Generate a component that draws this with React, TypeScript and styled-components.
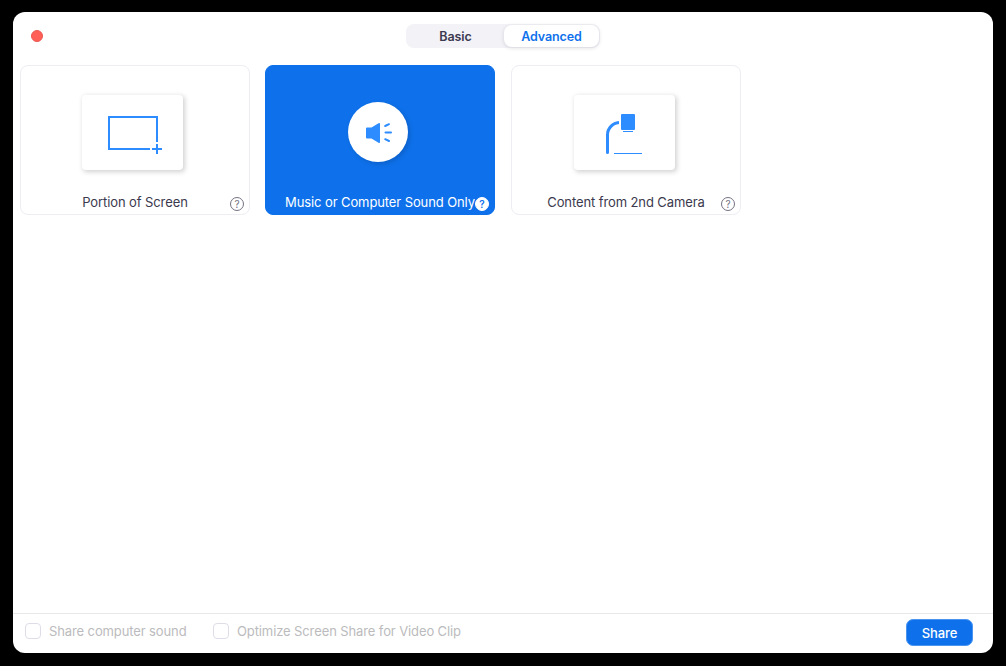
import React from "react";
import styled, { createGlobalStyle } from "styled-components";

const GlobalStyle = createGlobalStyle`
  * { box-sizing: border-box; }
  body { margin: 0; background: #000; overflow: hidden; }
  svg { display: block; }
`;

const Desktop = styled.div`
  width: 1006px;
  height: 666px;
  padding: 12px 13px 13px;
  background: #000;
  font-family: Inter, "Liberation Sans", sans-serif;
`;

const Window = styled.main`
  display: flex;
  flex-direction: column;
  width: 980px;
  height: 641px;
  background: #fff;
  border-radius: 12px;
  overflow: hidden;
`;

const TitleBar = styled.header`
  display: grid;
  grid-template-columns: 1fr 194px 1fr;
  align-items: center;
  height: 48px;
  padding-left: 18px;
  padding-right: 18px;
`;

const CloseButton = styled.button`
  width: 12px;
  height: 12px;
  padding: 0;
  border: 1px solid #ea5750;
  border-radius: 50%;
  background: #ff5f57;
`;

const Tabs = styled.div`
  display: flex;
  height: 24px;
  padding: 1px;
  border-radius: 8px;
  background: #f2f2f7;
`;

const Tab = styled.button<{ $active?: boolean }>`
  flex: ${(p) => (p.$active ? "0 0 95px" : "1")};
  height: 22px;
  padding: 1px 0 0;
  border: 0;
  border-radius: 8px;
  font: 600 12.5px/20px Inter, "Liberation Sans", sans-serif;
  letter-spacing: -0.1px;
  color: ${(p) => (p.$active ? "#0e71eb" : "#3c3a50")};
  background: ${(p) => (p.$active ? "#fff" : "transparent")};
  box-shadow: ${(p) => (p.$active ? "0 1px 4px rgba(30, 30, 50, 0.14)" : "none")};
`;

const Sources = styled.section`
  display: grid;
  grid-template-columns: 230px 231px 230px;
  column-gap: 15px;
  align-content: start;
  flex: 1;
  padding: 5px 7px 0;
`;

const Card = styled.article<{ $selected?: boolean }>`
  display: flex;
  flex-direction: column;
  align-items: center;
  width: 230px;
  height: 150px;
  border: 1px solid ${(p) => (p.$selected ? "#0e71eb" : "#ededf3")};
  border-radius: 8px;
  background: ${(p) => (p.$selected ? "#0e71eb" : "#fff")};
  color: ${(p) => (p.$selected ? "#fff" : "#3b394d")};
`;

const Preview = styled.div<{ $inset: number }>`
  display: flex;
  align-items: center;
  justify-content: center;
  width: 100%;
  height: 126px;
  padding: 7px ${(p) => p.$inset}px 0 0;
`;

const Thumb = styled.div<{ $round?: boolean }>`
  width: ${(p) => (p.$round ? 60 : 101)}px;
  height: ${(p) => (p.$round ? 60 : 75)}px;
  margin-top: -1px;
  border-radius: ${(p) => (p.$round ? "50%" : "4px")};
  background: #fff;
  box-shadow: ${(p) =>
    p.$round
      ? "2px 2px 5px rgba(0, 0, 0, 0.15)"
      : "1.5px 1.5px 5px rgba(0, 0, 0, 0.18)"};
`;

const CardFooter = styled.div`
  display: grid;
  grid-template-columns: 1fr auto 1fr;
  align-items: center;
  width: 100%;
  height: 20px;
  padding-right: 5px;
  padding-left: 5px;
`;

const CardLabel = styled.span`
  grid-column: 2;
  font-size: 13px;
  line-height: 18px;
  letter-spacing: -0.1px;
  white-space: nowrap;
`;

const Help = styled.span<{ $selected?: boolean }>`
  display: flex;
  align-items: center;
  justify-content: center;
  justify-self: end;
  width: 14px;
  height: 14px;
  margin-top: 3px;
  border: 1px solid ${(p) => (p.$selected ? "#fff" : "#747283")};
  border-radius: 50%;
  font-size: 10px;
  line-height: 12px;
  font-weight: ${(p) => (p.$selected ? 600 : 400)};
  color: ${(p) => (p.$selected ? "#0e71eb" : "#747283")};
  background: #fff;
`;

const Footer = styled.footer`
  display: flex;
  align-items: flex-start;
  height: 40px;
  padding: 5px 20px 0 12px;
  border-top: 1px solid #e8e8ec;
`;

const Option = styled.label<{ $width: number }>`
  display: flex;
  align-items: center;
  gap: 8px;
  width: ${(p) => p.$width}px;
  height: 24px;
  color: #bbbbbd;
  font-size: 13px;
  line-height: 18px;
  letter-spacing: -0.11px;
  white-space: nowrap;
`;

const Box = styled.span`
  flex: none;
  width: 16px;
  height: 16px;
  border: 1px solid #dfdde8;
  border-radius: 4px;
`;

const ShareButton = styled.button`
  width: 67px;
  height: 27px;
  margin-left: auto;
  padding: 1px 0 0;
  border: 1px solid #4b95f1;
  border-radius: 7px;
  background: #0e71eb;
  color: #fff;
  font: 500 13px/24px Inter, "Liberation Sans", sans-serif;
  letter-spacing: -0.1px;
`;

const PortionIcon = () => (
  <svg width="101" height="75" viewBox="0 0 101 75" fill="none" stroke="#2d8cff" strokeWidth="2">
    <path d="M75 47V22H27V54H68" />
    <path d="M70 54H80M75 49V59" />
  </svg>
);

const SoundIcon = () => (
  <svg width="60" height="60" viewBox="0 0 60 60">
    <path d="M19 25.5H23.5L30.5 21.2Q32 20.6 32 22V40Q32 41.4 30.5 40.8L23.5 36.5H19Q18 36.5 18 35.5V26.5Q18 25.5 19 25.5Z" fill="#2d8cff" />
    <path d="M37.2 24L41 22.2M37.5 30.5H43M37.2 37.2L41 39" fill="none" stroke="#2d8cff" strokeWidth="2" strokeLinecap="round" />
  </svg>
);

const CameraIcon = () => (
  <svg width="101" height="75" viewBox="0 0 101 75" fill="none" stroke="#2d8cff">
    <path d="M33.5 57.5V40A12.5 12.5 0 0 1 46 27.5" strokeWidth="3" strokeLinecap="round" />
    <path d="M46.5 24V31" stroke="#fff" strokeWidth="3" />
    <rect x="47" y="19" width="14" height="16" rx="1" fill="#2d8cff" stroke="none" />
    <path d="M49 36.5H59M40 58.5H68" strokeWidth="1" />
  </svg>
);

const sources = [
  { name: "Portion of Screen", icon: <PortionIcon />, inset: 5 },
  { name: "Music or Computer Sound Only", icon: <SoundIcon />, inset: 4, selected: true },
  { name: "Content from 2nd Camera", icon: <CameraIcon />, inset: 3 },
];

export default function App() {
  return (
    <>
      <GlobalStyle />
      <Desktop>
        <Window>
          <TitleBar>
            <CloseButton aria-label="Close" />
            <Tabs>
              <Tab>Basic</Tab>
              <Tab $active>Advanced</Tab>
            </Tabs>
          </TitleBar>
          <Sources>
            {sources.map((s) => (
              <Card key={s.name} $selected={s.selected}>
                <Preview $inset={s.inset}>
                  <Thumb $round={s.selected}>{s.icon}</Thumb>
                </Preview>
                <CardFooter>
                  <CardLabel>{s.name}</CardLabel>
                  <Help $selected={s.selected}>?</Help>
                </CardFooter>
              </Card>
            ))}
          </Sources>
          <Footer>
            <Option $width={188}>
              <Box />
              Share computer sound
            </Option>
            <Option $width={260}>
              <Box />
              Optimize Screen Share for Video Clip
            </Option>
            <ShareButton>Share</ShareButton>
          </Footer>
        </Window>
      </Desktop>
    </>
  );
}
